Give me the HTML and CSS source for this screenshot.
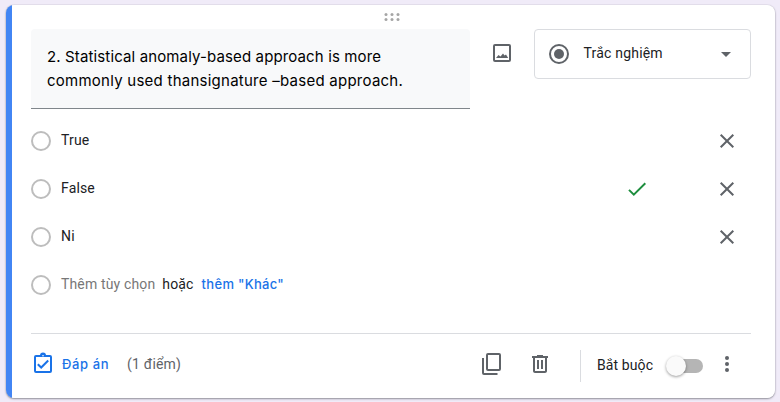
FILE: index.html
```html
<!DOCTYPE html>
<html lang="vi">
<head>
<meta charset="utf-8">
<title>Form</title>
<link rel="stylesheet" href="styles.css">
</head>
<body>
<main class="card">
  <svg class="drag" width="16" height="8" viewBox="0 0 16 8"><g fill="#a6a6a6"><circle cx="2" cy="1.5" r="1.5"/><circle cx="8" cy="1.5" r="1.5"/><circle cx="14" cy="1.5" r="1.5"/><circle cx="2" cy="6.5" r="1.5"/><circle cx="8" cy="6.5" r="1.5"/><circle cx="14" cy="6.5" r="1.5"/></g></svg>
  <header class="top">
    <div class="question"><span class="line first">2. Statistical anomaly-based approach is more</span><span class="line second">commonly used thansignature –based approach.</span></div>
    <svg class="image" width="24" height="24" viewBox="0 0 24 24"><rect x="4" y="4" width="16" height="16" rx="1" fill="none" stroke="#5f6368" stroke-width="2"/><path fill="#5f6368" d="M6 17l2.500-3 2 1.500 2.500-3 1.500 2 1.500-1 2.200 3.500z"/></svg>
    <div class="select">
      <svg width="24" height="24" viewBox="0 0 24 24"><circle cx="12" cy="12" r="9" fill="none" stroke="#5f6368" stroke-width="2"/><circle cx="12" cy="12" r="5" fill="#5f6368"/></svg>
      <span class="select-text">Trắc nghiệm</span>
      <svg class="arrow" width="10" height="5" viewBox="0 0 10 5"><path fill="#5f6368" d="M0 0h10L5 5z"/></svg>
    </div>
  </header>
  <section class="options">
    <div class="option"><i class="radio"></i><span class="label">True</span><svg class="close" width="24" height="24" viewBox="0 0 24 24"><path d="M5.700 5.700l12.600 12.600M18.300 5.700L5.700 18.300"/></svg></div>
    <div class="option"><i class="radio"></i><span class="label">False</span><svg class="check" width="24" height="24" viewBox="0 0 24 24"><path d="M4 12.900l4.800 4.800L20.300 6.300"/></svg><svg class="close" width="24" height="24" viewBox="0 0 24 24"><path d="M5.700 5.700l12.600 12.600M18.300 5.700L5.700 18.300"/></svg></div>
    <div class="option"><i class="radio"></i><span class="label">Ni</span><svg class="close" width="24" height="24" viewBox="0 0 24 24"><path d="M5.700 5.700l12.600 12.600M18.300 5.700L5.700 18.300"/></svg></div>
    <div class="option"><i class="radio"></i><span class="add">Thêm tùy chọn</span><span class="or">hoặc</span><span class="other">thêm "Khác"</span></div>
  </section>
  <footer class="footer">
    <svg class="key" width="24" height="24" viewBox="0 0 24 24"><rect x="4" y="4" width="16" height="16" rx="1" fill="none" stroke="#1a73e8" stroke-width="2"/><path fill="#1a73e8" d="M9 3.500a3 3 0 0 1 6 0z"/><circle cx="12" cy="3.700" r=".8" fill="#fff"/><path fill="none" stroke="#1a73e8" stroke-width="2" d="M6.800 12.200l3.400 3.300 7-7"/></svg>
    <span class="answer">Đáp án</span>
    <span class="points">(1 điểm)</span>
    <svg class="copy" width="24" height="24" viewBox="0 0 24 24"><g fill="none" stroke="#5f6368" stroke-width="2"><rect x="7" y="2" width="13" height="16" rx="1"/><path d="M3 6v15a1 1 0 0 0 1 1h13.500"/></g></svg>
    <svg class="trash" width="24" height="24" viewBox="0 0 24 24"><path fill="#5f6368" d="M15 4V3H9v1H4v2h1v13c0 1.100.9 2 2 2h10c1.100 0 2-.9 2-2V6h1V4h-5zm2 15H7V6h10v13zM9 8h2v9H9zm4 0h2v9h-2z"/></svg>
    <div class="required"><span class="required-text">Bắt buộc</span><div class="toggle"><i class="knob"></i></div>
    <svg class="more" width="24" height="24" viewBox="0 0 24 24"><g fill="#5f6368"><circle cx="12" cy="6" r="2"/><circle cx="12" cy="12" r="2"/><circle cx="12" cy="18" r="2"/></g></svg></div>
  </footer>
</main>
</body>
</html>
```
FILE: styles.css
```css
* { box-sizing: border-box; }
body { margin: 0; height: 402px; padding: 5px 5px 0 6px; overflow: hidden; background: #f0ebf8; font: 14px/20px Roboto, sans-serif; color: #202124; }
svg { display: block; flex: none; }
span { white-space: nowrap; }
.card { height: 393px; padding: 8px 24px 0 25px; border-radius: 8px; background: linear-gradient(90deg, #4285f4 6px, #fff 6px); box-shadow: 0 1px 2px rgba(60,64,67,.5), 0 0 1px rgba(60,64,67,.4); }
.drag { margin: 0 0 8px 352.5px; }
.top { display: flex; align-items: flex-start; height: 88px; }
.question { width: 439px; height: 80px; padding: 16px; border-bottom: 1px solid #80868b; border-radius: 4px 4px 0 0; background: #f8f9fa; color: #000; font: 15px/24px Inter, sans-serif; }
.line { display: block; }
.first { letter-spacing: .13px; }
.second { letter-spacing: .25px; }
.image { margin: 12px 20px 0; }
.select { display: flex; align-items: center; width: 217px; height: 50px; padding: 0 19px 0 12px; border: 1px solid #dadce0; border-radius: 4px; }
.select-text { margin: -2px 0 0 12.5px; letter-spacing: .2px; }
.arrow { margin: 1px 0 0 auto; }
.options { height: 217px; border-bottom: 1px solid #dadce0; }
.option { display: flex; align-items: center; height: 48px; }
.radio { width: 20px; height: 20px; flex: none; margin-right: 10px; border: 2px solid #bdbdbd; border-radius: 50%; }
.option span { margin-top: -2px; letter-spacing: .15px; }
.close { margin-left: auto; margin-right: 12px; fill: none; stroke: #5f6368; stroke-width: 2; }
.check { margin-left: auto; fill: none; stroke: #1e8e3e; stroke-width: 2; }
.check + .close { margin-left: 66px; }
.option .add { color: #777; }
.option .or { margin-left: 7px; }
.option .other { margin-left: 8px; color: #1a73e8; font: 500 13px/20px Inter, sans-serif; letter-spacing: .3px; }
.footer { display: flex; align-items: center; height: 60px; }
.answer { margin-left: 7px; color: #1a73e8; font: 500 13px/20px Inter, sans-serif; letter-spacing: .6px; }
.points { margin: -1px 0 0 18px; color: #5f6368; letter-spacing: .2px; }
.copy { margin-left: auto; }
.trash { margin-left: 24px; }
.required { display: flex; align-items: center; width: 171px; height: 32px; margin: 4px 0 0 28px; padding-left: 16px; border-left: 1px solid #dadce0; }
.required-text { margin-top: -2px; letter-spacing: .1px; }
.toggle { width: 36px; height: 14px; margin: 0 0 0 14px; border-radius: 7px; background: #b5b5b5; }
.knob { display: block; width: 20px; height: 20px; margin: -3px 0 0 -1px; border-radius: 50%; background: #fafafa; box-shadow: 0 1px 3px rgba(0,0,0,.4); }
.more { margin: -4px 12px 0 auto; }
```
